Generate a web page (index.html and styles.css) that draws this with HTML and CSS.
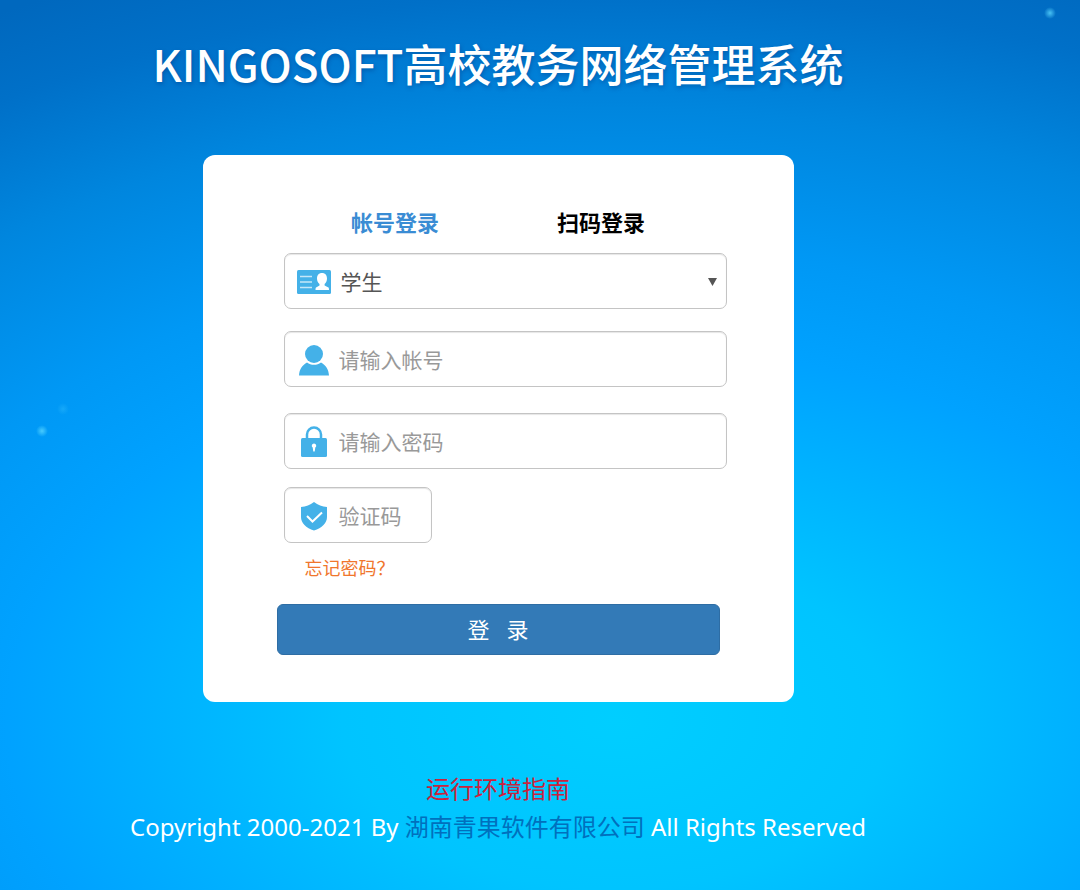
FILE: index.html
```html
<!DOCTYPE html>
<html lang="zh-CN">
<head>
    <meta charset="UTF-8">
    <meta name="viewport" content="width=device-width, initial-scale=1.0">
    <title>KINGOSOFT高校教务网络管理系统</title>
    <link rel="stylesheet" href="styles.css">
</head>
<body>
    <div class="wrap">
        <h1 class="title">KINGOSOFT高校教务网络管理系统</h1>

        <!-- 登录框 -->
        <form class="login">
            <div class="tabs">
                <button type="button" class="tab active">帐号登录</button>
                <button type="button" class="tab">扫码登录</button>
            </div>

            <div class="fields">
                <label class="field">
                    <svg class="icon" viewBox="0 0 34 34" aria-hidden="true">
                        <rect x="0" y="5" width="34" height="24" rx="1.500" fill="#44b1e8"/>
                        <path d="M3 11.5h12M3 17h12M3 22.5h12" stroke="#c4e7f8" stroke-width="1.5"/>
                        <path d="M25 8c3.200 0 5 2.200 5 5.500 0 2.500-1 4.500-2.400 5.500v1.600l3.400 1.600c.8.400 1 1 1 2.800H18.500c0-1.800.2-2.400 1-2.800l3-1.600V19C21 18 20 16 20 13.500 20 10.200 21.800 8 25 8z" fill="#fff"/>
                    </svg>
                    <select class="input role" name="role" aria-label="身份">
                        <option>学生</option>
                    </select>
                    <svg class="arrow" viewBox="0 0 10 10" aria-hidden="true"><path d="M0 1h9L4.500 9z" fill="#555"/></svg>
                </label>
                <label class="field">
                    <svg class="icon" viewBox="0 0 34 34" aria-hidden="true">
                        <path d="M2 32.500c.3-6.500 3.500-10.500 8-13 2 1.500 4.400 2.300 7 2.300s5-.8 7-2.300c4.500 2.500 7.700 6.500 8 13z" fill="#44b1e8"/>
                        <circle cx="17" cy="11" r="9" fill="#44b1e8"/>
                    </svg>
                    <input class="input" type="text" name="account" placeholder="请输入帐号" aria-label="帐号">
                </label>
                <label class="field password">
                    <svg class="icon" viewBox="0 0 34 34" aria-hidden="true">
                        <path d="M10 14V9.500a7 7 0 0 1 14 0V14" fill="none" stroke="#44b1e8" stroke-width="2.500"/>
                        <rect x="4" y="13" width="26" height="19" rx="1.500" fill="#44b1e8"/>
                        <path d="M17 18.500a2.200 2.200 0 0 1 1.300 4L17.700 26.500h-1.400l-.6-4a2.200 2.200 0 0 1 1.300-4z" fill="#fff"/>
                    </svg>
                    <input class="input" type="password" name="password" placeholder="请输入密码" aria-label="密码">
                </label>
                <label class="field code">
                    <svg class="icon" viewBox="0 0 34 34" aria-hidden="true">
                        <path d="M17 3c4 3 8 4.500 13 5v10c0 6-5 11-13 13.500C9 29 4 24 4 18V8c5-.5 9-2 13-5z" fill="#44b1e8"/>
                        <path d="M10 17l5.500 5.500L25 13.500" fill="none" stroke="#fff" stroke-width="2"/>
                    </svg>
                    <input class="input" type="text" name="code" placeholder="验证码" aria-label="验证码">
                </label>
            </div>

            <a class="forget" href="#">忘记密码？</a>
            <button type="submit" class="submit">登&nbsp;&nbsp; 录</button>
        </form>

        <!-- 版权 -->
        <div class="footer">
            <p><a class="guide" href="#">运行环境指南</a></p>
            <p>Copyright 2000-2021 By <a class="company" href="#">湖南青果软件有限公司</a> All Rights Reserved</p>
        </div>
    </div>

    <!-- 背景光点 -->
    <span class="spark spark1"></span>
    <span class="spark spark2"></span>
    <span class="spark spark3"></span>
</body>
</html>
```

FILE: styles.css
```css
*{
    margin: 0;
    padding: 0;
    box-sizing: border-box;
}
body{
    min-height: 100vh;
    overflow-x: hidden;
    font-family: "Noto Sans", "Noto Sans CJK SC", sans-serif;
    background: radial-gradient(ellipse 115% 86% at 57% 81%, #00ceff 0%, #00c4ff 22%, #00a2ff 49%, #0098f5 62%, #0086de 80%, #0070c8 95%, #0068be 105%);
}
button, input, select{
    font: inherit;
    border: none;
    background: none;
    outline: none;
}
a{
    text-decoration: none;
}
.wrap{
    display: flex;
    flex-direction: column;
    align-items: center;
    padding: 31px 84px 40px 0;
}
.title{
    font-family: "Noto Sans CJK SC", sans-serif;
    font-size: 44px;
    font-weight: 500;
    line-height: 64px;
    white-space: nowrap;
    color: #fff;
    text-shadow: 1px 2px 4px rgba(0,40,110,.35);
}

/* 登录框 */
.login{
    display: flex;
    flex-direction: column;
    width: 100%;
    max-width: 591px;
    margin-top: 60px;
    padding: 50px 74px 47px;
    background: #fff;
    border-radius: 12px;
}
.tabs{
    display: flex;
    justify-content: center;
    gap: 118px;
}
.tab{
    font-size: 22px;
    font-weight: 700;
    line-height: 34px;
    color: #000;
    cursor: pointer;
}
.tab.active{
    color: #3a8cd4;
}
.fields{
    display: flex;
    flex-direction: column;
    margin: 14px -7px 0 7px;
}
.field{
    display: flex;
    align-items: center;
    gap: 8px;
    height: 56px;
    margin-bottom: 22px;
    padding: 2px 8px 0 12px;
    border: 1px solid #c4c4c4;
    border-radius: 7px;
    box-shadow: inset 0 1px 1px rgba(0,0,0,.1);
}
.field.password{
    margin: 4px 0 18px;
}
.field.code{
    width: 148px;
    margin-bottom: 0;
}
.icon{
    flex: none;
    width: 34px;
    height: 34px;
}
.input{
    flex: 1;
    min-width: 0;
    height: 100%;
    font-size: 21px;
    color: #555;
}
.input::placeholder{
    color: #999;
    opacity: 1;
}
.role{
    appearance: none;
    padding-left: 2px;
}
.arrow{
    width: 10px;
    height: 10px;
    pointer-events: none;
}
.forget{
    align-self: flex-start;
    margin: 12px 0 0 28px;
    font-size: 18px;
    line-height: 26px;
    color: #f0762c;
}
.submit{
    height: 51px;
    margin-top: 23px;
    padding-bottom: 4px;
    font-size: 22px;
    color: #fff;
    background: #337ab7;
    border: 1px solid #2e6da4;
    border-radius: 6px;
    cursor: pointer;
}

/* 版权 */
.footer{
    margin-top: 68px;
    font-size: 24px;
    line-height: 38px;
    text-align: center;
    color: #fff;
}
.guide{
    color: #c9223c;
}
.company{
    color: #0070bd;
}

/* 背景光点 */
.spark{
    position: absolute;
    width: 12px;
    height: 12px;
    border-radius: 50%;
    background: radial-gradient(circle, rgba(90,215,255,.8), rgba(90,215,255,0) 70%);
}
.spark1{
    top: 7px;
    right: 24px;
}
.spark2{
    top: 425px;
    left: 36px;
}
.spark3{
    top: 403px;
    left: 57px;
    opacity: .3;
}
```
